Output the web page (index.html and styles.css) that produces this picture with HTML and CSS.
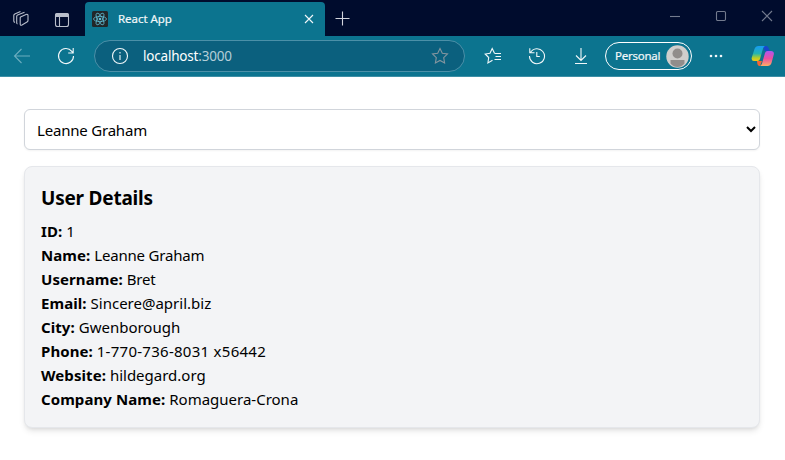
FILE: index.html
```html
<!DOCTYPE html>
<html lang="en">
<head>
<meta charset="utf-8">
<title>React App</title>
<link rel="stylesheet" href="styles.css">
</head>
<body>
<header class="browser">
  <div class="titlebar">
    <span class="tool workspaces"><svg width="18" height="18" viewBox="0 0 18 18"><path d="M8.500 7 14 4.500q2-.7 2 1v5q0 1-1 1.500L10 15q-1.800.8-1.800-1V7.700q0-.5.3-.700M5.500 14q-.800-.300-.800-1.200V6.500q0-1 .9-1.400L12.500 2.300M3 12.500q-1.200-.5-1.200-1.500V5.500q0-1 1-1.500L8.500 1.500"/></svg></span>
    <span class="tool"><svg width="16" height="16" viewBox="0 0 16 16"><path class="solid" d="M3 1h10a2 2 0 0 1 2 2v2H1V3a2 2 0 0 1 2-2z"/><rect x="1.500" y="1.500" width="13" height="13" rx="2"/><path d="M5.500 5v9.500"/></svg></span>
    <div class="tab">
      <svg class="favicon" width="16" height="16" viewBox="0 0 16 16"><rect class="tile" width="16" height="16" rx="1.500"/><g><ellipse cx="8" cy="8" rx="6.500" ry="2.600"/><ellipse cx="8" cy="8" rx="6.500" ry="2.600" transform="rotate(60 8 8)"/><ellipse cx="8" cy="8" rx="6.500" ry="2.600" transform="rotate(120 8 8)"/></g><circle cx="8" cy="8" r="1.300"/></svg>
      <span class="tab-title">React App</span>
      <svg class="tab-close" width="10" height="10" viewBox="0 0 10 10"><path d="m1 1 8 8m0-8L1 9"/></svg>
    </div>
    <svg class="new-tab" width="15" height="15" viewBox="0 0 15 15"><path d="M7.500 .5v14M.5 7.500h14"/></svg>
    <div class="window-controls">
      <span><svg width="12" height="12" viewBox="0 0 12 12"><path d="M1 6.500h10"/></svg></span>
      <span><svg width="12" height="12" viewBox="0 0 12 12"><rect x="1.500" y="1.500" width="9" height="9" rx="1.200"/></svg></span>
      <span><svg width="12" height="12" viewBox="0 0 12 12"><path d="m1 1 10 10m0-10L1 11"/></svg></span>
    </div>
  </div>
  <div class="toolbar">
    <span class="action dim"><svg width="18" height="18" viewBox="0 0 18 18"><path d="M17 9H1.500M8.500 2 1.500 9l7 7"/></svg></span>
    <span class="action"><svg width="18" height="18" viewBox="0 0 18 18"><path d="M16.500 9A7.500 7.500 0 1 1 14.800 4.300L16 5.800M16.200 1v5h-5"/></svg></span>
    <div class="address">
      <svg width="18" height="18" viewBox="0 0 18 18"><circle cx="9" cy="9" r="7.500"/><path d="M9 8v5M9 5v1.400"/></svg>
      <span class="url">localhost<span class="port">:3000</span></span>
      <svg class="favorite" width="18" height="18" viewBox="0 0 18 18"><path d="m9 1.500 2.300 4.800 5.200.7-3.800 3.700.9 5.300L9 13.500 4.400 16l.9-5.300L1.500 7l5.200-.7z"/></svg>
    </div>
    <span class="action"><svg width="18" height="18" viewBox="0 0 18 18"><path d="M10.500 6.500h6.500M11.500 9.500H17M10.500 12.500H17M10.500 6.300 8.200 1.500 6 6.200 1.200 7l3.500 3.500L3.900 16l4.600-2.700"/></svg></span>
    <span class="action"><svg width="18" height="18" viewBox="0 0 18 18"><path d="M2.500 5.500A7.500 7.500 0 1 1 1.500 9M1.800 1.300v4.500h4.700M8.800 5v4.500h3"/></svg></span>
    <span class="action"><svg width="18" height="18" viewBox="0 0 18 18"><path d="M9 1v12M4 8.500l5 5 5-5M3 16.500h12"/></svg></span>
    <div class="profile"><span>Personal</span><svg width="23" height="23" viewBox="0 0 23 23"><circle class="avatar" cx="11.500" cy="11.500" r="11.200"/><circle class="person" cx="11.500" cy="8.500" r="5"/><path class="person" d="M4.500 15h14v3.500q-3 3.500-7 3.500t-7-3.500z"/></svg></div>
    <span class="action more"><svg width="16" height="4" viewBox="0 0 16 4"><circle cx="3" cy="2" r="1.300"/><circle cx="8" cy="2" r="1.300"/><circle cx="13" cy="2" r="1.300"/></svg></span>
    <span class="action copilot"><svg width="24" height="22" viewBox="0 0 24 22">
      <defs>
        <linearGradient id="cool" x1="0" y1="0" x2="0" y2="1"><stop offset="0" stop-color="#169bf5"/><stop offset=".5" stop-color="#24b4b0"/><stop offset=".8" stop-color="#b8cf25"/><stop offset="1" stop-color="#f7c619"/></linearGradient>
        <linearGradient id="warm" x1="0" y1="0" x2="0" y2="1"><stop offset="0" stop-color="#ad56f0"/><stop offset=".5" stop-color="#ec4fa0"/><stop offset="1" stop-color="#ffae65"/></linearGradient>
      </defs>
      <path fill="#1847cc" d="M12 1h3q2 0 2.600 2l1 3h-5z"/>
      <path fill="#f56535" d="M6 16h5l-2 5q-2 .3-2.600-2z"/>
      <path fill="url(#cool)" d="M7.500 1H14q-1.500.5-2 2.500L9 14q-.6 2-2.500 2H3q-3 0-2.200-3.500L3.500 4Q4.500 1 7.500 1z"/>
      <path fill="url(#warm)" d="M16.500 21H8.800q1.500-.5 2.200-2.500L14 8q.6-2 2.500-2H20q3.400 0 2.800 3.500l-2.300 8.500q-1 3-4 3z"/>
    </svg></span>
  </div>
</header>
<main class="page">
  <select class="user-select"><option>Leanne Graham</option></select>
  <section class="card">
    <h2>User Details</h2>
    <p><strong>ID:</strong> 1</p>
    <p><strong>Name:</strong> <span class="name">Leanne Graham</span></p>
    <p><strong>Username:</strong> <span class="name">Bret</span></p>
    <p><strong>Email:</strong> Sincere@april.biz</p>
    <p><strong>City:</strong> Gwenborough</p>
    <p><strong>Phone:</strong> <span class="phone">1-770-736-8031 x56442</span></p>
    <p><strong>Website:</strong> hildegard.org</p>
    <p><strong>Company Name:</strong> Romaguera-Crona</p>
  </section>
</main>
</body>
</html>
```
FILE: styles.css
```css
* { box-sizing: border-box; }
body {
  margin: 0;
  height: 460px;
  overflow: hidden;
  background: #fff;
  color: #000;
  font-family: "Segoe UI", "Noto Sans", "Open Sans", sans-serif;
}
svg { display: block; flex: none; fill: none; stroke: currentColor; stroke-width: 1.1; }
.browser { color: #f1f7f9; }
.titlebar {
  display: flex;
  height: 36px;
  background: #000c2d;
}
.tool {
  display: flex;
  width: 42px;
  padding-top: 3px;
  align-items: center;
  justify-content: center;
  color: #b9bfcb;
}
.workspaces { width: 41px; padding-top: 1px; }
.tool .solid { fill: #b9bfcb; stroke: none; }
.tab {
  display: flex;
  width: 240px;
  height: 34px;
  margin: 2px 10px 0 2px;
  padding: 0 11px 0 7px;
  align-items: center;
  border-radius: 4px 4px 0 0;
  background: #0c748f;
}
.favicon { stroke: #60b9d0; stroke-width: .8; }
.favicon .tile { fill: #222629; stroke: none; }
.favicon circle { fill: #60b9d0; stroke: none; }
.tab-title { margin: -2px 0 0 10px; font-size: 11.5px; letter-spacing: -.05px; white-space: nowrap; -webkit-text-stroke: .2px; }
.tab-close { margin-left: auto; }
.new-tab { margin-top: 11px; color: #d2d5dd; }
.window-controls { display: flex; height: 32px; margin-left: auto; margin-right: -5px; color: #737b8e; }
.window-controls span { display: flex; width: 46px; align-items: center; justify-content: center; }
.toolbar {
  display: flex;
  height: 41px;
  align-items: center;
  background: #0c748f;
  border-bottom: 1px solid #3d8fa6;
}
.action { display: flex; width: 44px; justify-content: center; flex: none; }
.dim { color: #6badbf; }
.address {
  display: flex;
  width: 371px;
  height: 32px;
  margin: 0 6px;
  padding: 0 15px 0 16px;
  align-items: center;
  border: 1px solid #4b90a8;
  border-radius: 16px;
  background: #0b607e;
}
.url { margin-left: 14px; font-size: 13.5px; letter-spacing: -.2px; color: #fff; }
.port { color: #b3ced8; }
.favorite { margin-left: auto; color: #84959f; }
.profile {
  display: flex;
  width: 87px;
  height: 28px;
  margin: 0 2px;
  padding: 0 2px 2px 9px;
  align-items: center;
  justify-content: space-between;
  border: 1px solid #fff;
  border-radius: 14px;
  font-size: 11.5px;
  letter-spacing: -.25px;
  -webkit-text-stroke: .2px;
}
.profile svg { margin-top: 2px; }
.avatar { fill: #d0cecc; stroke: none; }
.person { fill: #918d8b; stroke: none; }
.more svg { fill: currentColor; stroke: none; }
.copilot { margin-left: 3px; }
.copilot svg { stroke: none; }
.page { padding: 32px 25px 0 24px; }
.user-select {
  display: block;
  width: 100%;
  height: 41px;
  margin: 0 0 16px;
  padding: 8px;
  border: 1px solid #d1d5db;
  border-radius: 6px;
  background: #fff;
  color: #000;
  font: 15px/24px "Segoe UI", "Noto Sans", "Open Sans", sans-serif;
  letter-spacing: -.2px;
  box-shadow: 0 1px 2px rgb(0 0 0 / 5%);
}
.card {
  height: 262px;
  padding: 15px 16px;
  border: 1px solid #e5e7eb;
  border-radius: 8px;
  background: #f3f4f6;
  box-shadow: 0 4px 6px -1px rgb(0 0 0 / 10%), 0 2px 4px -2px rgb(0 0 0 / 10%);
}
.card h2 { margin: 2px 0 7px; font-size: 19px; line-height: 28px; font-weight: 700; letter-spacing: -.22px; }
.card p { margin: 0; font-size: 15px; line-height: 24px; }
.card strong { font-weight: 700; letter-spacing: .08px; }
.card .name { letter-spacing: -.2px; }
.card .phone { letter-spacing: .27px; }
```
